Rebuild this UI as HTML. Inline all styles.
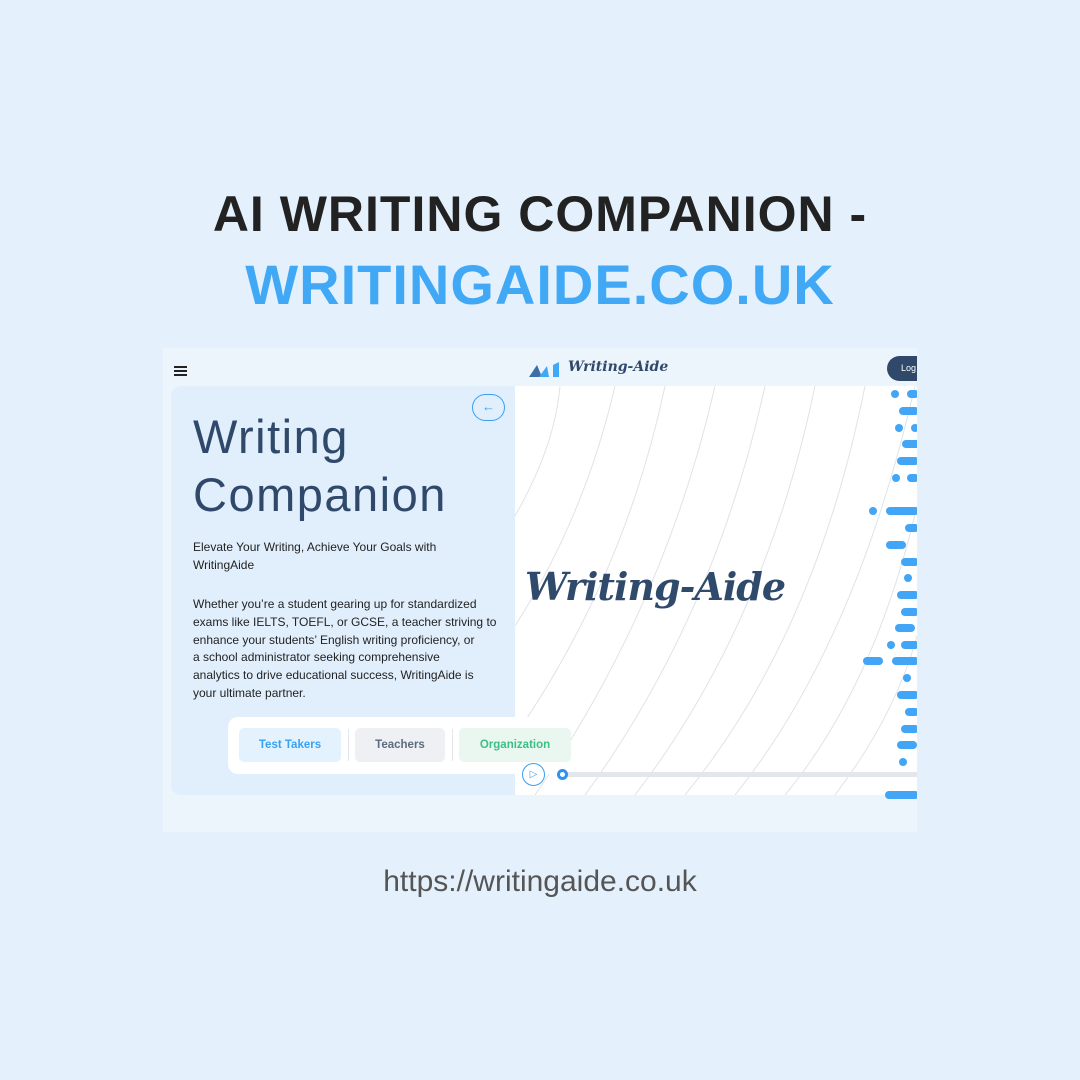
<!DOCTYPE html>
<html><head><meta charset="utf-8"><style>
*{margin:0;padding:0;box-sizing:border-box}
body{width:1080px;height:1080px;background:#e4f1fc;font-family:"Liberation Sans",sans-serif;position:relative;overflow:hidden}
.t{position:absolute;left:0;width:1080px;text-align:center;font-weight:900;font-size:50px;letter-spacing:1px}
.shot{position:absolute;left:163px;top:348px;width:754px;height:484px;background:#ecf4fc;overflow:hidden}
.left{position:absolute;left:8px;top:38px;width:344px;height:409px;background:#e1effd;border-radius:10px 0 0 10px}
.right{position:absolute;left:352px;top:38px;width:402px;height:409px;background:#fff}
.abs{position:absolute}
</style></head><body>
<div class="t" style="top:185px;color:#222">AI WRITING COMPANION -</div>
<div class="t" style="top:252px;color:#40a8f4;font-size:56px">WRITINGAIDE.CO.UK</div>

<div class="shot">
 <div class="right">
  <svg width="402" height="409" style="position:absolute;left:0;top:0">
   <g fill="none" stroke="#dfe3e8" stroke-width="1">
    <path d="M0 130 Q40 60 45 0"/>
    <path d="M0 240 Q70 130 100 0"/>
    <path d="M0 350 Q110 190 150 0"/>
    <path d="M20 409 Q150 220 200 0"/>
    <path d="M70 409 Q200 230 250 0"/>
    <path d="M120 409 Q250 240 300 0"/>
    <path d="M170 409 Q300 250 350 0"/>
    <path d="M220 409 Q340 260 400 0"/>
    <path d="M270 409 Q360 300 402 120"/>
    <path d="M320 409 Q380 330 402 250"/>
   </g>
  </svg>
  <div class="abs" style="left:376px;top:4px;width:8px;height:8px;border-radius:4px;background:#42a5f5"></div>
  <div class="abs" style="left:392px;top:4px;width:12px;height:8px;border-radius:4px;background:#42a5f5"></div>
  <div class="abs" style="left:384px;top:21px;width:20px;height:8px;border-radius:4px;background:#42a5f5"></div>
  <div class="abs" style="left:380px;top:38px;width:8px;height:8px;border-radius:4px;background:#42a5f5"></div>
  <div class="abs" style="left:396px;top:38px;width:8px;height:8px;border-radius:4px;background:#42a5f5"></div>
  <div class="abs" style="left:387px;top:54px;width:20px;height:8px;border-radius:4px;background:#42a5f5"></div>
  <div class="abs" style="left:382px;top:71px;width:22px;height:8px;border-radius:4px;background:#42a5f5"></div>
  <div class="abs" style="left:377px;top:88px;width:8px;height:8px;border-radius:4px;background:#42a5f5"></div>
  <div class="abs" style="left:392px;top:88px;width:12px;height:8px;border-radius:4px;background:#42a5f5"></div>
  <div class="abs" style="left:354px;top:121px;width:8px;height:8px;border-radius:4px;background:#42a5f5"></div>
  <div class="abs" style="left:371px;top:121px;width:33px;height:8px;border-radius:4px;background:#42a5f5"></div>
  <div class="abs" style="left:390px;top:138px;width:14px;height:8px;border-radius:4px;background:#42a5f5"></div>
  <div class="abs" style="left:371px;top:155px;width:20px;height:8px;border-radius:4px;background:#42a5f5"></div>
  <div class="abs" style="left:386px;top:172px;width:18px;height:8px;border-radius:4px;background:#42a5f5"></div>
  <div class="abs" style="left:389px;top:188px;width:8px;height:8px;border-radius:4px;background:#42a5f5"></div>
  <div class="abs" style="left:382px;top:205px;width:22px;height:8px;border-radius:4px;background:#42a5f5"></div>
  <div class="abs" style="left:386px;top:222px;width:18px;height:8px;border-radius:4px;background:#42a5f5"></div>
  <div class="abs" style="left:380px;top:238px;width:20px;height:8px;border-radius:4px;background:#42a5f5"></div>
  <div class="abs" style="left:372px;top:255px;width:8px;height:8px;border-radius:4px;background:#42a5f5"></div>
  <div class="abs" style="left:386px;top:255px;width:18px;height:8px;border-radius:4px;background:#42a5f5"></div>
  <div class="abs" style="left:348px;top:271px;width:20px;height:8px;border-radius:4px;background:#42a5f5"></div>
  <div class="abs" style="left:377px;top:271px;width:27px;height:8px;border-radius:4px;background:#42a5f5"></div>
  <div class="abs" style="left:388px;top:288px;width:8px;height:8px;border-radius:4px;background:#42a5f5"></div>
  <div class="abs" style="left:382px;top:305px;width:22px;height:8px;border-radius:4px;background:#42a5f5"></div>
  <div class="abs" style="left:390px;top:322px;width:14px;height:8px;border-radius:4px;background:#42a5f5"></div>
  <div class="abs" style="left:386px;top:339px;width:18px;height:8px;border-radius:4px;background:#42a5f5"></div>
  <div class="abs" style="left:382px;top:355px;width:20px;height:8px;border-radius:4px;background:#42a5f5"></div>
  <div class="abs" style="left:384px;top:372px;width:8px;height:8px;border-radius:4px;background:#42a5f5"></div>
  <div class="abs" style="left:370px;top:405px;width:34px;height:8px;border-radius:4px;background:#42a5f5"></div>
  <div class="abs" style="left:10px;top:178px;font-family:'DejaVu Serif',serif;font-style:italic;font-weight:bold;font-size:38px;color:#2f4a6b;letter-spacing:-1px">Writing-Aide</div>
 </div>
 <div class="left">
  <div class="abs" style="left:301px;top:8px;width:33px;height:27px;border:1px solid #3b9df0;border-radius:14px;color:#3b9df0;font-size:13px;text-align:center;line-height:24px">←</div>
  <div class="abs" style="left:22px;top:22px;font-size:47px;line-height:58px;color:#30496b;letter-spacing:1.5px;white-space:nowrap">Writing<br>Companion</div>
  <div class="abs" style="left:22px;top:152px;width:320px;font-size:12px;line-height:18px;color:#222;white-space:nowrap">Elevate Your Writing, Achieve Your Goals with<br>WritingAide</div>
  <div class="abs" style="left:22px;top:210px;width:320px;font-size:12px;line-height:17.8px;color:#222;white-space:nowrap">Whether you’re a student gearing up for standardized<br>exams like IELTS, TOEFL, or GCSE, a teacher striving to<br>enhance your students’ English writing proficiency, or<br>a school administrator seeking comprehensive<br>analytics to drive educational success, WritingAide is<br>your ultimate partner.</div>
 </div>
 <div class="abs" style="left:65px;top:369px;width:343px;height:57px;background:#fff;border-radius:10px 0 0 10px"></div>
 <div class="abs" style="left:76px;top:380px;width:102px;height:34px;background:#e4f2fe;border-radius:5px;color:#35a2f5;font-size:11.5px;font-weight:bold;text-align:center;line-height:34px">Test Takers</div>
 <div class="abs" style="left:185px;top:381px;width:1px;height:32px;background:#e3e6ea"></div>
 <div class="abs" style="left:192px;top:380px;width:90px;height:34px;background:#eef0f3;border-radius:5px;color:#5b6b80;font-size:11.5px;font-weight:bold;text-align:center;line-height:34px">Teachers</div>
 <div class="abs" style="left:289px;top:381px;width:1px;height:32px;background:#e3e6ea"></div>
 <div class="abs" style="left:296px;top:380px;width:112px;height:34px;background:#eaf7f1;border-radius:5px;color:#3cbf84;font-size:11.5px;font-weight:bold;text-align:center;line-height:34px">Organization</div>
 <div class="abs" style="left:400px;top:424px;width:354px;height:5px;background:#e3e7ec"></div>
 <div class="abs" style="left:394px;top:421px;width:11px;height:11px;border-radius:50%;border:3px solid #2d93f0;background:#fff"></div>
 <div class="abs" style="left:359px;top:415px;width:23px;height:23px;border-radius:50%;border:1px solid #3b9df0;background:#fff;color:#3b9df0;font-size:10px;text-align:center;line-height:21px">▷</div>
 <div class="abs" style="left:11px;top:18px;width:13px;height:1.5px;background:#222;box-shadow:0 4px 0 #222,0 8px 0 #222"></div>
 <svg class="abs" style="left:366px;top:12px" width="31" height="18"><path d="M0 17 L8 5 L13 17Z" fill="#3b6ea8"/><path d="M10 17 L18 6 L20 17Z" fill="#3fa9f5"/><path d="M24 5 L30 2 L30 17 L24 17Z" fill="#3fa9f5"/></svg>
 <div class="abs" style="left:405px;top:11px;font-family:'DejaVu Serif',serif;font-style:italic;font-weight:bold;font-size:14px;color:#30496b">Writing-Aide</div>
 <div class="abs" style="left:724px;top:8px;width:50px;height:25px;border-radius:13px;background:#30496b;color:#fff;font-size:9px;line-height:25px;padding-left:14px">Log</div>
</div>

<div class="abs" style="left:0;top:865px;width:1080px;text-align:center;font-size:30px;color:#555">https://writingaide.co.uk</div>
</body></html>
